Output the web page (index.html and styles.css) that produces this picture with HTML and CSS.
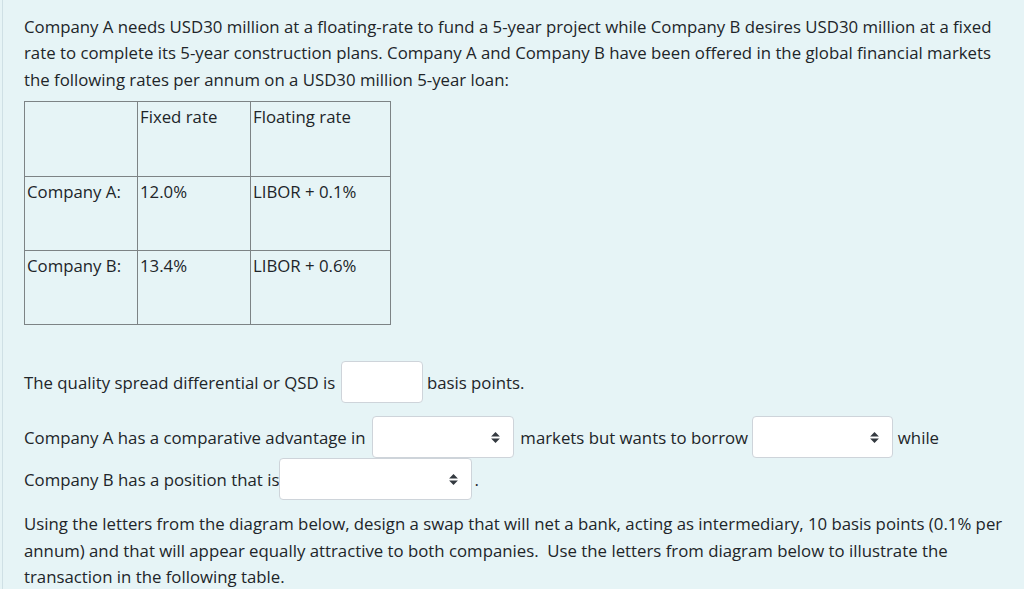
FILE: index.html
```html
<!DOCTYPE html>
<html lang="en">
<head>
<meta charset="utf-8">
<title>Interest rate swap question</title>
<link rel="stylesheet" href="styles.css">
</head>
<body>
<div class="page">
  <p class="intro">Company A needs USD30 million at a floating-rate to fund a 5-year project while Company B desires USD30 million at a fixed rate to complete its 5-year construction plans. Company A and Company B have been offered in the global financial markets the following rates per annum on a USD30 million 5-year loan:</p>

  <table class="rates">
    <colgroup><col class="c1"><col class="c2"><col class="c3"></colgroup>
    <tr><td></td><td>Fixed rate</td><td>Floating rate</td></tr>
    <tr><td>Company A:</td><td>12.0%</td><td>LIBOR + 0.1%</td></tr>
    <tr><td>Company B:</td><td>13.4%</td><td>LIBOR + 0.6%</td></tr>
  </table>

  <p class="qsd">The quality spread differential or QSD is <span class="field text-field"></span> basis points.</p>

  <p class="adv">Company A has a comparative advantage in <span class="field select s-a"><svg class="arrow" viewBox="0 0 4 5"><path d="M2 0L0 2h4zm0 5L0 3h4z"/></svg></span> markets but wants to borrow <span class="field select s-b"><svg class="arrow" viewBox="0 0 4 5"><path d="M2 0L0 2h4zm0 5L0 3h4z"/></svg></span> while Company B has a position that is<span class="field select s-c"><svg class="arrow" viewBox="0 0 4 5"><path d="M2 0L0 2h4zm0 5L0 3h4z"/></svg></span>.</p>

  <p class="swap">Using the letters from the diagram below, design a swap that will net a bank, acting as intermediary, 10 basis points (0.1% per annum) and that will appear equally attractive to both companies.&nbsp; Use the letters from diagram below to illustrate the transaction in the following table.</p>
</div>
</body>
</html>
```

FILE: styles.css
```css
html, body {
  margin: 0;
  padding: 0;
  background: #e6f4f6;
}

body {
  font-family: "Open Sans", "Noto Sans", sans-serif;
  font-size: 16.8px;
  line-height: 26.4px;
  color: #212529;
}

.page {
  margin-left: 2px;
  border-left: 1px solid #cfe0e5;
  padding: 14px 16px 0 21px;
  min-height: 589px;
  box-sizing: border-box;
}

.page p {
  margin: 0;
}

.rates {
  margin-top: 8px;
  border-collapse: collapse;
  table-layout: fixed;
  width: 366px;
}

.rates .c1 { width: 113px; }
.rates .c2 { width: 113px; }
.rates .c3 { width: 140px; }

.rates td {
  border: 1px solid #7d8385;
  vertical-align: top;
  padding: 2px 2px 0;
  height: 71px;
  white-space: nowrap;
}

.rates tr:first-child td {
  height: 72px;
}

.qsd {
  margin-top: 38px !important;
}

.adv {
  margin-top: 13px !important;
}

.swap {
  margin-top: 9px !important;
}

.field {
  display: inline-flex;
  align-items: center;
  justify-content: flex-end;
  vertical-align: middle;
  margin-top: -2px;
  margin-bottom: 2px;
  box-sizing: border-box;
  height: 42px;
  background: #fff;
  border: 1px solid #ced4da;
  border-radius: 4px;
}

.text-field {
  width: 82px;
  margin-left: 1px;
}

.select {
  padding-right: 13px;
}

.s-a { width: 142px; margin-left: 2px; margin-right: 2px; }
.s-b { width: 141px; }
.s-c { width: 193px; margin-right: 2px; }

.arrow {
  width: 9px;
  height: 11px;
  fill: #343a40;
}
```
